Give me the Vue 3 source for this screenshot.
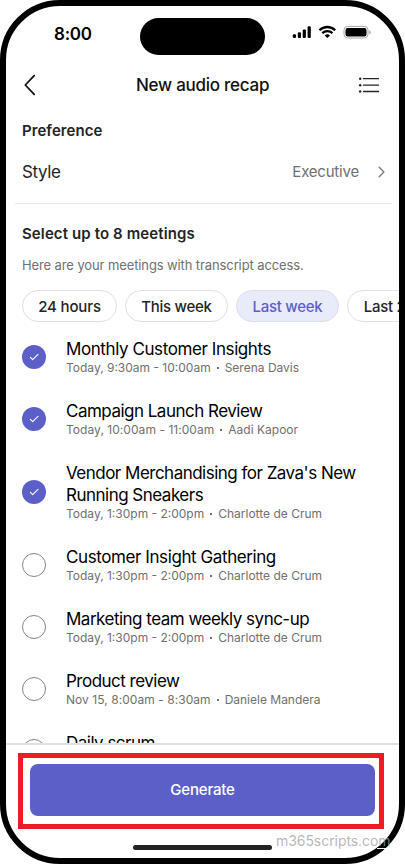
<script setup>
const chips = [
  { label: '24 hours', cls: 'chip-a' },
  { label: 'This week', cls: 'chip-b' },
  { label: 'Last week', cls: 'chip-b active' },
  { label: 'Last 2 weeks', cls: 'chip-c' },
]
const meetings = [
  { title: 'Monthly Customer Insights', time: 'Today, 9:30am - 10:00am', who: 'Serena Davis', on: true, loose: true },
  { title: 'Campaign Launch Review', time: 'Today, 10:00am - 11:00am', who: 'Aadi Kapoor', on: true, wide: true },
  { title: "Vendor Merchandising for Zava's New Running Sneakers", time: 'Today, 1:30pm - 2:00pm', who: 'Charlotte de Crum', on: true },
  { title: 'Customer Insight Gathering', time: 'Today, 1:30pm - 2:00pm', who: 'Charlotte de Crum', on: false, loose: true },
  { title: 'Marketing team weekly sync-up', time: 'Today, 1:30pm - 2:00pm', who: 'Charlotte de Crum', on: false },
  { title: 'Product review', time: 'Nov 15, 8:00am - 8:30am', who: 'Daniele Mandera', on: false, wide: true },
  { title: 'Daily scrum', time: 'Nov 15, 9:00am - 9:30am', who: 'Daniele Mandera', on: false },
]
</script>

<template>
  <div class="stage">
    <div class="phone">
      <div class="status">
        <span class="clock">8:00</span>
        <span class="island"></span>
        <svg class="signals" width="80" height="16" viewBox="0 0 80 16">
          <g fill="#000">
            <rect x="0.8" y="9.2" width="3.2" height="3.8" rx="1" />
            <rect x="5.8" y="7.2" width="3.2" height="5.8" rx="1" />
            <rect x="10.7" y="4.4" width="3.2" height="8.6" rx="1" />
            <rect x="15.6" y="1.2" width="3.2" height="11.8" rx="1" />
          </g>
          <g fill="none" stroke="#000" stroke-width="2.3">
            <path d="M27.5 5.2a11.2 11.2 0 0 1 15.7 0" />
            <path d="M30.3 8.2a7.3 7.3 0 0 1 10.1 0" />
          </g>
          <path d="M32.7 10.4a3.9 3.9 0 0 1 5.3 0L35.35 13z" fill="#000" />
          <rect x="52" y="1.4" width="24" height="11.6" rx="3.6" fill="none" stroke="#a6a6a6" />
          <rect x="53.5" y="2.9" width="21" height="8.6" rx="2.2" fill="#000" />
          <path d="M77.2 5.2q1.5.6 1.5 2t-1.5 2z" fill="#a6a6a6" />
        </svg>
      </div>

      <header class="nav">
        <svg width="14" height="22" viewBox="0 0 14 22"><path d="M11.2 1.7 2.3 11l8.9 9.3" fill="none" stroke="#111" stroke-width="1.8" stroke-linecap="round" stroke-linejoin="round" /></svg>
        <h1>New audio recap</h1>
        <svg width="22" height="18" viewBox="0 0 22 18">
          <g stroke="#242424" stroke-width="1.3" stroke-linecap="round"><path d="M5.5 2.7h15M5.5 9.2h15M5.5 15.5h15" /></g>
          <g fill="#242424"><circle cx="2.2" cy="2.7" r="1.2" /><circle cx="2.2" cy="9.2" r="1.2" /><circle cx="2.2" cy="15.5" r="1.2" /></g>
        </svg>
      </header>

      <h2 class="pref">Preference</h2>
      <div class="style-row">
        <span class="style-label">Style</span>
        <span class="style-value">Executive</span>
        <svg width="8" height="12" viewBox="0 0 8 12"><path d="m1.2 1.2 4.7 4.8-4.7 4.8" fill="none" stroke="#7c7c7c" stroke-width="1.4" stroke-linecap="round" stroke-linejoin="round" /></svg>
      </div>

      <h2 class="select">Select up to 8 meetings</h2>
      <p class="hint">Here are your meetings with transcript access.</p>

      <div class="chips">
        <span v-for="c in chips" :key="c.label" class="chip" :class="c.cls">{{ c.label }}</span>
      </div>

      <div class="list">
        <div v-for="m in meetings" :key="m.title" class="item">
          <span class="check" :class="{ on: m.on }">
            <svg v-if="m.on" width="12" height="10" viewBox="0 0 12 10"><path d="m2.4 5.3 2.3 2.3L10 2.3" fill="none" stroke="#fff" stroke-width="1.1" stroke-linecap="round" stroke-linejoin="round" /></svg>
          </span>
          <div class="text">
            <div class="title" :class="{ loose: m.loose }">{{ m.title }}</div>
            <div class="meta" :class="{ wide: m.wide }"><span>{{ m.time }}</span><i></i><span>{{ m.who }}</span></div>
          </div>
        </div>
      </div>

      <footer class="footer">
        <div class="highlight"><button class="generate">Generate</button></div>
        <div class="home"></div>
      </footer>
    </div>
    <div class="watermark">m365scripts.com</div>
    <div class="mark-line"></div>
  </div>
</template>

<style>
body { background: #fff; overflow: hidden; }
</style>

<style scoped>
* { box-sizing: border-box; }
.stage { position: relative; width: 405px; height: 864px; font-family: Inter, "Liberation Sans", sans-serif; color: #242424; }
.phone { width: 405px; height: 864px; border: 6px solid #000; border-radius: 60px; overflow: hidden; background: #fff; display: flex; flex-direction: column; }
.status { height: 56px; flex: none; display: flex; align-items: flex-start; }
.clock { width: 86px; padding: 17px 0 0 48px; font-size: 17px; line-height: 22px; font-weight: 600; color: #000; white-space: nowrap; letter-spacing: -.25px; }
.island { width: 125px; height: 37px; margin: 12px 0 0 48px; border-radius: 19px; background: #000; }
.signals { margin: 19px 0 0 27px; }
.nav { height: 46px; flex: none; display: flex; align-items: center; padding: 0 19px 0 17px; }
h1 { flex: 1; margin: 0; padding-left: 99px; font-size: 17px; line-height: 22px; font-weight: 500; color: #111; letter-spacing: -.26px; white-space: nowrap; }
h2 { margin: 0; padding-left: 16px; font-size: 15px; line-height: 20px; font-weight: 600; flex: none; }
.pref { margin-top: 13px; letter-spacing: .06px; }
.style-row { height: 63px; flex: none; display: flex; align-items: center; margin: 0 7px 0 9px; padding: 0 6px 0 7px; border-bottom: 1px solid #e8e8e8; }
.style-label { flex: 1; font-size: 17px; line-height: 22px; letter-spacing: -.4px; }
.style-value { font-size: 15px; line-height: 20px; color: #707070; margin-right: 19px; letter-spacing: -.2px; }
.select { margin-top: 20px; letter-spacing: .11px; }
.hint { margin: 11px 0 0; padding-left: 16px; font-size: 13px; line-height: 20px; color: #707070; flex: none; letter-spacing: -.11px; }
.chips { display: flex; gap: 8px; margin: 15px 0 0 16px; flex: none; height: 32px; }
.chip { flex: none; display: flex; align-items: center; justify-content: center; height: 32px; border: 1px solid #e0e0e0; border-radius: 16px; font-size: 15px; font-weight: 500; white-space: nowrap; letter-spacing: -.27px; }
.chip-a { width: 95px; letter-spacing: -.15px; }
.chip-b { width: 103px; }
.chip-c { width: 124px; }
.active { background: #e8ebfa; color: #5b5fc7; border-color: #dcdfeb; }
.list { margin-top: 16px; padding: 0 24px 0 16px; display: flex; flex-direction: column; gap: 24px; flex: 1; min-height: 0; overflow: hidden; }
.item { flex: none; display: flex; align-items: center; gap: 20px; }
.check { flex: none; width: 24px; height: 24px; border-radius: 50%; border: 1px solid #858585; display: flex; align-items: center; justify-content: center; }
.check.on { background: #5b5fc7; border: 0; }
.title { font-size: 17px; line-height: 22px; color: #000; letter-spacing: -.51px; }
.title.loose { letter-spacing: -.41px; }
.meta { display: flex; align-items: center; font-size: 12px; line-height: 16px; color: #707070; white-space: nowrap; }
.meta i { width: 2px; height: 2px; margin: 0 6px; background: #707070; }
.meta.wide span:first-child { letter-spacing: .05px; }
.footer { flex: none; height: 115px; border-top: 2px solid #e0e0e0; display: flex; flex-direction: column; }
.highlight { width: 366px; height: 76px; margin: 8px 0 0 12px; border: 5px solid #ed1c24; padding: 6px 4px 0 7px; }
.generate { display: block; width: 100%; height: 52px; border: 0; border-radius: 8px; background: #5b5fc7; color: #fff; font: 500 15px/20px Inter, sans-serif; padding: 0; letter-spacing: -.18px; }
.home { width: 139px; height: 5px; border-radius: 3px; background: #222; margin: 16px 0 0 127px; }
.watermark { position: absolute; left: 276px; top: 832px; font-size: 14px; line-height: 18px; letter-spacing: -.06px; color: rgba(160, 160, 160, .75); white-space: nowrap; }
.mark-line { position: absolute; left: 377px; top: 848px; width: 13px; height: 1px; background: #fff; }
</style>
